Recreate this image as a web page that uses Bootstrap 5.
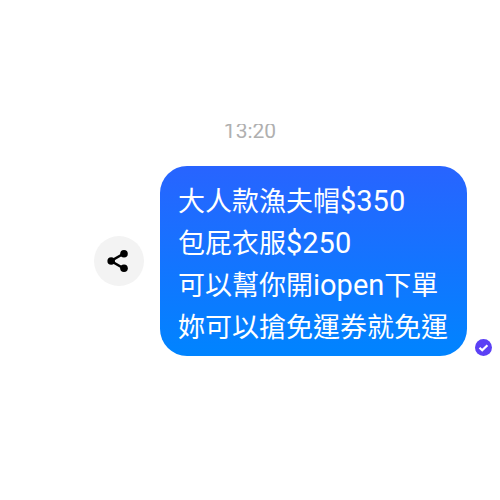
<!DOCTYPE html>
<html lang="zh-Hant">
<head>
<meta charset="utf-8">
<meta name="viewport" content="width=device-width, initial-scale=1">
<title>Chat</title>
<link href="https://cdn.jsdelivr.net/npm/bootstrap@5.3.0/dist/css/bootstrap.min.css" rel="stylesheet">
<style>
body { background: #fff; font-family: Roboto, "Noto Sans CJK TC", sans-serif; }
.chat { padding: 124px 8px 0; }
.stamp { height: 42px; overflow: hidden; font-size: 21px; line-height: 14px; color: #b0b0b0; }
.share-btn { width: 50px; height: 50px; background: #f3f3f3; color: #000; }
.bubble { padding: 15px 19px 7px 18px; border-radius: 27px; color: #fff; font-size: 27px; line-height: 42px; background: linear-gradient(#2864ff, #0084ff); }
.latin { font-size: 29px; line-height: 1; }
.message-row { gap: 8px; }
</style>
</head>
<body>
<main class="chat">
  <div class="stamp text-center"><time>13:20</time></div>
  <div class="message-row d-flex justify-content-end align-items-end">
    <div class="d-flex align-items-center gap-3">
      <button type="button" class="share-btn btn border-0 rounded-circle p-0 d-flex align-items-center justify-content-center" aria-label="分享">
        <svg width="24" height="24" viewBox="0 0 24 24" aria-hidden="true"><path d="M16 5 4 12l12 7" fill="none" stroke="currentColor" stroke-width="2.6"/><g fill="currentColor"><circle cx="17" cy="4.8" r="3.8"/><circle cx="4.2" cy="12" r="3.8"/><circle cx="17" cy="19.2" r="3.8"/></g></svg>
      </button>
      <div class="bubble text-nowrap">
        <div>大人款漁夫帽<span class="latin">$350</span></div>
        <div>包屁衣服<span class="latin">$250</span></div>
        <div>可以幫你開<span class="latin">iopen</span>下單</div>
        <div>妳可以搶免運券就免運</div>
      </div>
    </div>
    <svg width="17" height="17" viewBox="0 0 17 17" role="img" aria-label="已送達"><circle cx="8.5" cy="8.5" r="8.5" fill="#5b40f5"/><path d="m4.5 8.8 2.7 2.5 5.2-5.1" fill="none" stroke="#fff" stroke-width="2.2"/></svg>
  </div>
</main>
<script src="https://cdn.jsdelivr.net/npm/bootstrap@5.3.0/dist/js/bootstrap.bundle.min.js"></script>
</body>
</html>
